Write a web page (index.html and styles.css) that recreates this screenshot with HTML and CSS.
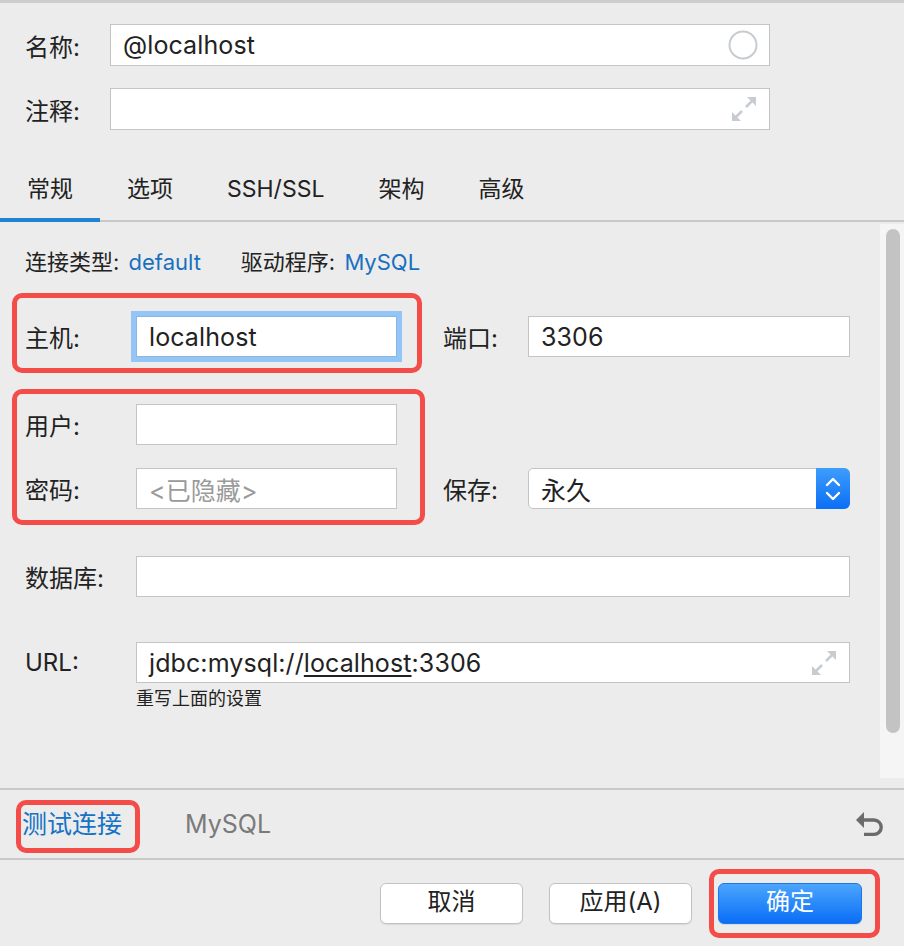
FILE: index.html
```html
<!DOCTYPE html>
<html lang="zh-CN">
<head>
<meta charset="utf-8">
<title>连接</title>
<link rel="stylesheet" href="styles.css">
</head>
<body>
<div class="window">
  <div class="topline"></div>
  <div class="header">
    <div class="hrow">
      <span class="hlbl">名称:</span>
      <div class="field hfield">
        <span class="val">@localhost</span>
        <svg class="ico-circle" width="30" height="30" viewBox="0 0 30 30"><circle cx="15" cy="15" r="13.5" fill="none" stroke="#c6ccd1" stroke-width="2"/></svg>
      </div>
    </div>
    <div class="hrow">
      <span class="hlbl">注释:</span>
      <div class="field hfield">
        <span class="val"></span>
        <svg class="ico-expand" width="24" height="24" viewBox="0 0 24 24"><polygon points="15,0 24,0 24,9" fill="#c6ccd1"/><line x1="20" y1="4" x2="14" y2="10" stroke="#c6ccd1" stroke-width="2.5"/><polygon points="0,15 0,24 9,24" fill="#c6ccd1"/><line x1="4" y1="20" x2="10" y2="14" stroke="#c6ccd1" stroke-width="2.5"/></svg>
      </div>
    </div>
  </div>

  <div class="tabs">
    <div class="tab active">常规</div>
    <div class="tab">选项</div>
    <div class="tab">SSH/SSL</div>
    <div class="tab">架构</div>
    <div class="tab">高级</div>
  </div>

  <div class="body">
    <div class="form">
      <div class="info">
        <span>连接类型: <a class="link">default</a></span>
        <span class="info2">驱动程序: <a class="link">MySQL</a></span>
      </div>

      <div class="row host-row">
        <div class="left mark mark-host">
          <span class="rl">主机:</span>
          <div class="field lfield focused"><span class="val">localhost</span></div>
        </div>
        <span class="rl2">端口:</span>
        <div class="field rfield"><span class="val">3306</span></div>
      </div>

      <div class="group">
        <div class="leftcol mark mark-user">
          <div class="row">
            <span class="rl">用户:</span>
            <div class="field lfield"></div>
          </div>
          <div class="row">
            <span class="rl">密码:</span>
            <div class="field lfield"><span class="val ph">&lt;已隐藏&gt;</span></div>
          </div>
        </div>
        <div class="rightcol">
          <div class="row">
            <span class="rl2">保存:</span>
            <div class="field rfield select">
              <span class="val">永久</span>
              <span class="stepper">
                <svg width="16" height="24" viewBox="0 0 16 24"><polyline points="2,8 8,2 14,8" fill="none" stroke="#fff" stroke-width="2.4" stroke-linecap="round" stroke-linejoin="round"/><polyline points="2,16 8,22 14,16" fill="none" stroke="#fff" stroke-width="2.4" stroke-linecap="round" stroke-linejoin="round"/></svg>
              </span>
            </div>
          </div>
        </div>
      </div>

      <div class="row db-row">
        <span class="rl">数据库:</span>
        <div class="field ffield"></div>
      </div>

      <div class="row url-row">
        <span class="rl">URL:</span>
        <div class="field ffield">
          <span class="val">jdbc:mysql://<u>localhost</u>:3306</span>
          <svg class="ico-expand" width="24" height="24" viewBox="0 0 24 24"><polygon points="15,0 24,0 24,9" fill="#c6ccd1"/><line x1="20" y1="4" x2="14" y2="10" stroke="#c6ccd1" stroke-width="2.5"/><polygon points="0,15 0,24 9,24" fill="#c6ccd1"/><line x1="4" y1="20" x2="10" y2="14" stroke="#c6ccd1" stroke-width="2.5"/></svg>
        </div>
      </div>
      <div class="note">重写上面的设置</div>
    </div>
    <div class="scroll"><div class="thumb"></div></div>
  </div>

  <div class="bottombar">
    <span class="test mark mark-test">测试连接</span>
    <span class="mysql">MySQL</span>
    <svg class="undo" width="28" height="28" viewBox="0 0 28 28"><polygon points="1,10 9,2 9,18" fill="#6b6b6b"/><path d="M8 10 H19 A7.2 7.2 0 0 1 19 24.4 H9" fill="none" stroke="#6b6b6b" stroke-width="3.4"/></svg>
  </div>

  <div class="actions">
    <div class="btn">取消</div>
    <div class="btn">应用(A)</div>
    <div class="btn primary mark mark-ok">确定</div>
  </div>
</div>
</body>
</html>
```

FILE: styles.css
```css
html, body {
  margin: 0;
  padding: 0;
}
body {
  background: #ececec;
  font-family: Inter, "Noto Sans CJK SC", sans-serif;
  color: #222;
}
.window {
  width: 904px;
  height: 946px;
  overflow: hidden;
  display: flex;
  flex-direction: column;
}
.topline {
  flex: none;
  height: 3px;
  background: #cdcdcd;
}

/* header */
.header {
  flex: none;
  padding: 21px 0 0 25px;
  display: flex;
  flex-direction: column;
  gap: 22px;
}
.hrow {
  display: flex;
  align-items: center;
  height: 42px;
}
.hlbl {
  width: 85px;
  font-size: 24px;
}
.field {
  box-sizing: border-box;
  height: 100%;
  background: #fff;
  border: 1px solid #c4c4c4;
  display: flex;
  align-items: center;
  padding: 0 12px;
  font-size: 24px;
  color: #222;
}
.val {
  flex: 1;
  white-space: nowrap;
  font-size: 25px;
  letter-spacing: 0.1px;
}
.hfield {
  width: 660px;
}
.ico-circle { margin-right: -1px; }
.ico-expand { margin-right: 1px; }

/* tabs */
.tabs {
  flex: none;
  margin-top: 30px;
  display: flex;
  border-bottom: 2px solid #c8c8c8;
}
.tab {
  padding: 0 27px;
  height: 58px;
  line-height: 58px;
  font-size: 23px;
  border-bottom: 4px solid transparent;
  margin-bottom: -2px;
}
.tab.active {
  border-bottom-color: #1f82d2;
}

/* body */
.body {
  flex: none;
  height: 566px;
  display: flex;
}
.form {
  flex: 1;
  padding: 26px 0 0 25px;
}
.scroll {
  width: 24px;
  margin: 2px 0 10px;
  background: #f5f5f5;
}
.thumb {
  margin: 5px 0 0 6px;
  width: 14px;
  height: 504px;
  border-radius: 7px;
  background: #c3c3c3;
}

.info {
  height: 28px;
  line-height: 28px;
  font-size: 22px;
  display: flex;
}
.info2 { margin-left: 40px; }
.link {
  color: #1a70c0;
  margin-left: 3px;
}

.row {
  display: flex;
  align-items: center;
  height: 41px;
}
.left {
  display: flex;
  align-items: center;
  height: 100%;
}
.rl {
  width: 111px;
  font-size: 24px;
}
.rl2 {
  width: 85px;
  margin-left: 46px;
  font-size: 24px;
}
.lfield { width: 261px; }
.rfield { width: 322px; }
.ffield { width: 714px; }

.focused {
  border-color: #8db6df;
  box-shadow: 0 0 0 5px #93c6f7;
}
.ph { color: #9a9a9a; }

.host-row { margin-top: 40px; }
.group {
  margin-top: 47px;
  display: flex;
}
.leftcol {
  display: flex;
  flex-direction: column;
  gap: 23px;
}
.rightcol {
  display: flex;
  flex-direction: column;
  justify-content: flex-end;
}
.select {
  border-radius: 5px;
  padding-right: 0;
}
.stepper {
  align-self: stretch;
  width: 34px;
  margin: -1px -1px -1px 0;
  border-radius: 0 6px 6px 0;
  background: linear-gradient(#3e9dfc, #0b6ff5);
  display: flex;
  align-items: center;
  justify-content: center;
}
.db-row { margin-top: 47px; }
.url-row { margin-top: 45px; }
.url-row u {
  text-decoration-thickness: 1.5px;
  text-underline-offset: 3px;
}
.note {
  margin: 5px 0 0 111px;
  line-height: 22px;
  font-size: 18px;
}

/* red annotation boxes (overlays) */
.mark { position: relative; }
.mark::after {
  content: "";
  position: absolute;
  border: 5px solid #f44c49;
  border-radius: 10px;
  pointer-events: none;
}
.mark-host::after { top: -23px; left: -13px; right: -25px; bottom: -16px; }
.mark-user::after { top: -15px; left: -13px; right: -28px; bottom: -16px; }
.mark-test::after { top: -7px; left: -6px; right: -18px; bottom: -12px; }
.mark-ok::after { top: -15px; left: -10px; right: -19px; bottom: -15px; }

/* bottom bar */
.bottombar {
  flex: none;
  height: 68px;
  border-top: 2px solid #c9c9c9;
  border-bottom: 2px solid #c9c9c9;
  display: flex;
  align-items: center;
  padding: 0 21px 0 22px;
}
.test {
  font-size: 25px;
  line-height: 34px;
  color: #1572c6;
}
.mysql {
  margin-left: 63px;
  font-size: 25px;
  color: #7a7a7a;
}
.undo { margin-left: auto; }

/* actions */
.actions {
  flex: 1;
  display: flex;
  justify-content: flex-end;
  align-items: flex-start;
  gap: 26px;
  padding: 23px 42px 0 0;
}
.btn {
  box-sizing: border-box;
  width: 143px;
  height: 41px;
  border: 1px solid #c2c2c2;
  border-radius: 6px;
  background: #fff;
  box-shadow: 0 1px 1px rgba(0,0,0,0.08);
  display: flex;
  align-items: center;
  justify-content: center;
  font-size: 24px;
  line-height: 1;
  padding-bottom: 3px;
  color: #222;
}
.btn.primary {
  width: 144px;
  color: #fff;
  border-color: #1c77ea;
  background: linear-gradient(#4ba5fd, #0a6ef6);
}
```
